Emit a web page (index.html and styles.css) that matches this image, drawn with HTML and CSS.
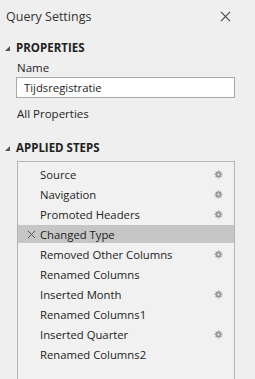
FILE: index.html
```html
<!DOCTYPE html>
<html lang="nl">
<head>
    <meta charset="UTF-8">
    <title>Query Settings</title>
    <link rel="stylesheet" href="styles.css">
</head>
<body>
    <div class="pane">
        <div class="pane-header">
            <span class="pane-title">Query Settings</span>
            <svg class="close-icon" viewBox="0 0 12 12"><path d="M1 1L11 11M11 1L1 11"/></svg>
        </div>

        <!-- Properties -->
        <div class="section-head">
            <span class="caret"></span>
            <span>PROPERTIES</span>
        </div>
        <div class="section-body">
            <div class="field-label">Name</div>
            <div class="name-input">Tijdsregistratie</div>
            <div class="link">All Properties</div>
        </div>

        <!-- Applied steps -->
        <div class="section-head steps-head">
            <span class="caret"></span>
            <span>APPLIED STEPS</span>
        </div>
        <ul class="steps">
            <li class="step"><span class="step-x"></span><span class="step-name">Source</span><svg class="gear" viewBox="0 0 10 10"><use href="#gear"/></svg></li>
            <li class="step"><span class="step-x"></span><span class="step-name">Navigation</span><svg class="gear" viewBox="0 0 10 10"><use href="#gear"/></svg></li>
            <li class="step"><span class="step-x"></span><span class="step-name">Promoted Headers</span><svg class="gear" viewBox="0 0 10 10"><use href="#gear"/></svg></li>
            <li class="step selected">
                <span class="step-x"><svg viewBox="0 0 10 10"><path d="M1 1L9 9M9 1L1 9"/></svg></span>
                <span class="step-name">Changed Type</span>
            </li>
            <li class="step"><span class="step-x"></span><span class="step-name">Removed Other Columns</span><svg class="gear" viewBox="0 0 10 10"><use href="#gear"/></svg></li>
            <li class="step"><span class="step-x"></span><span class="step-name">Renamed Columns</span></li>
            <li class="step"><span class="step-x"></span><span class="step-name">Inserted Month</span><svg class="gear" viewBox="0 0 10 10"><use href="#gear"/></svg></li>
            <li class="step"><span class="step-x"></span><span class="step-name">Renamed Columns1</span></li>
            <li class="step"><span class="step-x"></span><span class="step-name">Inserted Quarter</span><svg class="gear" viewBox="0 0 10 10"><use href="#gear"/></svg></li>
            <li class="step"><span class="step-x"></span><span class="step-name">Renamed Columns2</span></li>
        </ul>
    </div>

    <!-- gear icon -->
    <svg width="0" height="0" class="defs">
        <defs>
            <g id="gear">
                <path d="M5 0.6V9.4M0.6 5H9.4M1.9 1.9L8.1 8.1M8.1 1.9L1.9 8.1" stroke="#9a9a9a" stroke-width="1.6"/>
                <circle cx="5" cy="5" r="3" fill="#9a9a9a"/>
                <circle cx="5" cy="5" r="1.2" fill="#f1f1f1"/>
            </g>
        </defs>
    </svg>
</body>
</html>
```

FILE: styles.css
```css
* {
    margin: 0;
    padding: 0;
    box-sizing: border-box;
}

body {
    font-family: 'Open Sans', 'Noto Sans', sans-serif;
    background: #efefef;
    color: #1e1e1e;
    width: 255px;
    height: 379px;
    overflow: hidden;
}

.defs {
    position: absolute;
}

.pane {
    padding: 0 20px 0 0;
}

/* header */
.pane-header {
    display: flex;
    align-items: center;
    justify-content: space-between;
    height: 32px;
    padding: 0 4px 0 6px;
}

.pane-title {
    font-size: 12.5px;
    color: #333;
}

.close-icon {
    width: 11px;
    height: 11px;
    stroke: #444;
    stroke-width: 1.2;
    fill: none;
}

/* section headers */
.section-head {
    display: flex;
    align-items: center;
    gap: 6px;
    margin-top: 6px;
    padding-left: 5px;
    height: 18px;
    font-size: 11.5px;
    font-weight: 700;
    color: #222;
}

.caret {
    width: 0;
    height: 0;
    border-left: 5px solid transparent;
    border-bottom: 5px solid #555;
    margin-top: 2px;
}

.section-body {
    padding-left: 17px;
}

.field-label {
    font-size: 11.5px;
    margin-top: 3px;
    line-height: 18px;
}

.name-input {
    background: #fff;
    border: 1px solid #a9a9a9;
    height: 21px;
    margin-left: -1px;
    padding: 0 7px;
    font-size: 11.3px;
    line-height: 19px;
}

.link {
    font-size: 11.5px;
    line-height: 18px;
    margin-top: 7px;
}

.steps-head {
    margin-top: 15px;
}

/* steps list */
.steps {
    list-style: none;
    display: flex;
    flex-direction: column;
    gap: 2px;
    margin: 5px 0 0 17px;
    border: 1px solid #b4b4b4;
    border-bottom: none;
    height: 222px;
    padding-top: 3px;
    background: #f1f1f1;
}

.step {
    display: flex;
    align-items: center;
    height: 18px;
    flex-shrink: 0;
    font-size: 11.3px;
    color: #222;
}

.step.selected {
    background: #c6c6c6;
}

.step-x {
    width: 22px;
    display: flex;
    justify-content: flex-end;
    padding-right: 4px;
}

.step-x svg {
    width: 9px;
    height: 9px;
    stroke: #555;
    stroke-width: 1.1;
    fill: none;
}

.step-name {
    flex: 1;
}

.gear {
    width: 9px;
    height: 9px;
    margin-right: 11px;
}
```
